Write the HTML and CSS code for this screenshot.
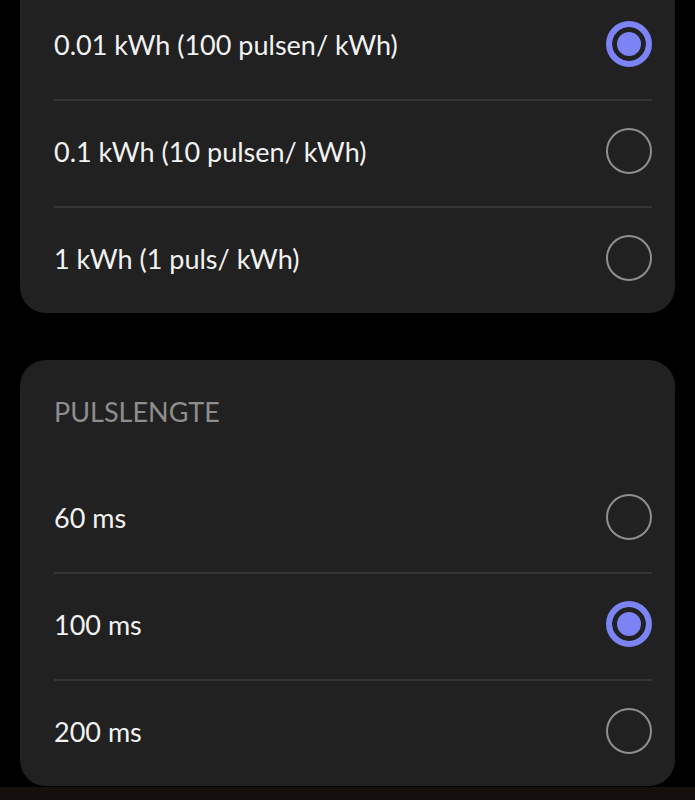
FILE: index.html
```html
<!DOCTYPE html>
<html lang="nl">
<head>
  <meta charset="UTF-8">
  <meta name="viewport" content="width=device-width, initial-scale=1.0">
  <title>Pulsinstellingen</title>
  <link rel="stylesheet" href="styles.css">
</head>
<body>
  <div class="page">
      <!-- Pulswaarde -->
      <div class="card card-first">
          <div class="row">
              <span class="label">0.01 kWh (100 pulsen/ kWh)</span>
              <span class="radio checked"></span>
          </div>
          <div class="row">
              <span class="label">0.1 kWh (10 pulsen/ kWh)</span>
              <span class="radio"></span>
          </div>
          <div class="row">
              <span class="label">1 kWh (1 puls/ kWh)</span>
              <span class="radio"></span>
          </div>
      </div>

      <!-- Pulslengte -->
      <div class="card card-last">
          <div class="card-title">PULSLENGTE</div>
          <div class="row">
              <span class="label">60 ms</span>
              <span class="radio"></span>
          </div>
          <div class="row">
              <span class="label">100 ms</span>
              <span class="radio checked"></span>
          </div>
          <div class="row">
              <span class="label">200 ms</span>
              <span class="radio"></span>
          </div>
      </div>
  </div>
  <div class="bottom-bar"></div>
</body>
</html>
```

FILE: styles.css
```css
body {
    background-color: #000;
    font-family: Lato, "Noto Sans", sans-serif;
    margin: 0;
    color: #f2f2f2;
    overflow: hidden;
}
.page {
    padding: 0 20px;
}
.card {
    background: #212121;
    border-radius: 26px;
    padding: 0 23px 0 34px;
    margin-bottom: 47px;
}
.card-first {
    margin-top: -6px;
    border-top-left-radius: 0;
    border-top-right-radius: 0;
}
.card-last {
    margin-bottom: 1px;
}
.card-title {
    height: 102px;
    padding-bottom: 5px;
    display: flex;
    align-items: center;
    font-size: 27px;
    color: #8e8e8e;
}
.row {
    height: 100px;
    padding-bottom: 5px;
    display: flex;
    align-items: center;
    justify-content: space-between;
}
.row + .row {
    border-top: 2px solid #353535;
}
.label {
    font-size: 27px;
}
.radio {
    width: 46px;
    height: 46px;
    box-sizing: border-box;
    border-radius: 50%;
    border: 2.5px solid #8f8f8f;
}
.radio.checked {
    border: 6px solid #7b83f5;
    background: #7b83f5;
    box-shadow: inset 0 0 0 5px #212121;
}
.bottom-bar {
    height: 16px;
    background: #15100e;
}
```
